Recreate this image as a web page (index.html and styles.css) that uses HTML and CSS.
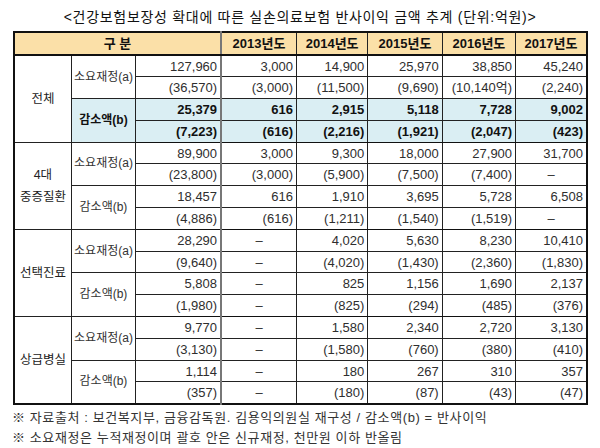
FILE: index.html
```html
<!DOCTYPE html>
<html lang="ko">
<head>
<meta charset="utf-8">
<link rel="stylesheet" href="styles.css">
</head>
<body>
<div class="page">
  <h1 class="title">&lt;건강보험보장성 확대에 따른 실손의료보험 반사이익 금액 추계 (단위:억원)&gt;</h1>
  <table class="tbl">
    <colgroup>
      <col class="c1"><col class="c2"><col class="c3">
      <col class="y13"><col class="y14"><col class="y15"><col class="y16"><col class="y17">
    </colgroup>
    <thead>
      <tr class="head">
        <th colspan="3">구 분</th>
        <th class="sep">2013년도</th><th>2014년도</th><th>2015년도</th><th>2016년도</th><th>2017년도</th>
      </tr>
    </thead>
    <tbody>
      <tr>
        <td rowspan="4" class="grp">전체</td>
        <td rowspan="2" class="lab">소요재정(a)</td>
        <td>127,960</td><td class="sep">3,000</td><td>14,900</td><td>25,970</td><td>38,850</td><td>45,240</td>
      </tr>
      <tr>
        <td>(36,570)</td><td class="sep">(3,000)</td><td>(11,500)</td><td>(9,690)</td><td>(10,140억)</td><td>(2,240)</td>
      </tr>
      <tr class="hl">
        <td rowspan="2" class="lab">감소액(b)</td>
        <td>25,379</td><td class="sep">616</td><td>2,915</td><td>5,118</td><td>7,728</td><td>9,002</td>
      </tr>
      <tr class="hl grpend">
        <td>(7,223)</td><td class="sep">(616)</td><td>(2,216)</td><td>(1,921)</td><td>(2,047)</td><td>(423)</td>
      </tr>

      <tr>
        <td rowspan="4" class="grp">4대<br>중증질환</td>
        <td rowspan="2" class="lab">소요재정(a)</td>
        <td>89,900</td><td class="sep">3,000</td><td>9,300</td><td>18,000</td><td>27,900</td><td>31,700</td>
      </tr>
      <tr>
        <td>(23,800)</td><td class="sep">(3,000)</td><td>(5,900)</td><td>(7,500)</td><td>(7,400)</td><td class="na">–</td>
      </tr>
      <tr>
        <td rowspan="2" class="lab">감소액(b)</td>
        <td>18,457</td><td class="sep">616</td><td>1,910</td><td>3,695</td><td>5,728</td><td>6,508</td>
      </tr>
      <tr class="grpend">
        <td>(4,886)</td><td class="sep">(616)</td><td>(1,211)</td><td>(1,540)</td><td>(1,519)</td><td class="na">–</td>
      </tr>

      <tr>
        <td rowspan="4" class="grp">선택진료</td>
        <td rowspan="2" class="lab">소요재정(a)</td>
        <td>28,290</td><td class="sep na">–</td><td>4,020</td><td>5,630</td><td>8,230</td><td>10,410</td>
      </tr>
      <tr>
        <td>(9,640)</td><td class="sep na">–</td><td>(4,020)</td><td>(1,430)</td><td>(2,360)</td><td>(1,830)</td>
      </tr>
      <tr>
        <td rowspan="2" class="lab">감소액(b)</td>
        <td>5,808</td><td class="sep na">–</td><td>825</td><td>1,156</td><td>1,690</td><td>2,137</td>
      </tr>
      <tr class="grpend">
        <td>(1,980)</td><td class="sep na">–</td><td>(825)</td><td>(294)</td><td>(485)</td><td>(376)</td>
      </tr>

      <tr>
        <td rowspan="4" class="grp">상급병실</td>
        <td rowspan="2" class="lab">소요재정(a)</td>
        <td>9,770</td><td class="sep na">–</td><td>1,580</td><td>2,340</td><td>2,720</td><td>3,130</td>
      </tr>
      <tr>
        <td>(3,130)</td><td class="sep na">–</td><td>(1,580)</td><td>(760)</td><td>(380)</td><td>(410)</td>
      </tr>
      <tr>
        <td rowspan="2" class="lab">감소액(b)</td>
        <td>1,114</td><td class="sep na">–</td><td>180</td><td>267</td><td>310</td><td>357</td>
      </tr>
      <tr>
        <td>(357)</td><td class="sep na">–</td><td>(180)</td><td>(87)</td><td>(43)</td><td>(47)</td>
      </tr>
    </tbody>
  </table>
  <div class="notes">
    <p>※ 자료출처 : 보건복지부, 금융감독원. 김용익의원실 재구성 / 감소액(b) = 반사이익</p>
    <p>※ 소요재정은 누적재정이며 괄호 안은 신규재정, 천만원 이하 반올림</p>
  </div>
</div>
</body>
</html>
```

FILE: styles.css
```css
html, body {
  margin: 0;
  padding: 0;
  background: #ffffff;
}
body {
  font-family: "Liberation Sans", "Noto Sans CJK KR", sans-serif;
  color: #222;
}
.page {
  width: 600px;
  height: 448px;
  overflow: hidden;
}
.title {
  margin: 0;
  height: 31px;
  box-sizing: border-box;
  padding-top: 5px;
  line-height: 24px;
  font-size: 14px;
  font-weight: normal;
  text-align: center;
  color: #111;
  letter-spacing: 0.7px;
}
.tbl {
  margin-left: 13px;
  border-collapse: collapse;
  table-layout: fixed;
  width: 575px;
  border: 2px solid #111;
  font-size: 13px;
}
.c1 { width: 57px; }
.c2 { width: 64px; }
.c3 { width: 85px; }
.y13 { width: 75px; }
.y14 { width: 71px; }
.y15 { width: 74px; }
.y16 { width: 73px; }
.y17 { width: 71px; }
.tbl th, .tbl td {
  border: 1px solid #222;
  padding: 0 3px 0 2px;
  line-height: 15px;
  white-space: nowrap;
  overflow: hidden;
}
.head {
  height: 23px;
  background: #fbe0a8;
}
.head th {
  font-weight: bold;
  font-size: 13px;
  text-align: center;
  color: #111;
  border-bottom: 2px solid #111;
  padding: 0;
}
.tbl tbody tr {
  height: 21.8px;
}
.tbl td {
  text-align: right;
  color: #2e2e2e;
}
.tbl td.sep, .tbl th.sep {
  border-left: 2px solid #777;
}
.tbl td.grp {
  text-align: center;
  background: #fff;
  color: #222;
  padding: 0 2px;
  line-height: 22px;
  font-size: 12.5px;
  font-weight: normal;
}
.tbl td.lab {
  text-align: center;
  padding: 0 1px;
  color: #333;
  font-size: 12px;
}
.tbl td.na {
  text-align: center;
  padding: 0;
}
.hl td {
  background: #daeef3;
  font-weight: bold;
  color: #111;
}
.hl td.lab {
  color: #111;
}
.tbl tr.grpend td {
  border-bottom: 1px solid #111;
}
.notes {
  margin-top: 3px;
  padding-left: 12px;
  font-size: 13px;
  letter-spacing: 0.6px;
  color: #333;
}
.notes p {
  margin: 0;
  line-height: 20px;
}
```
